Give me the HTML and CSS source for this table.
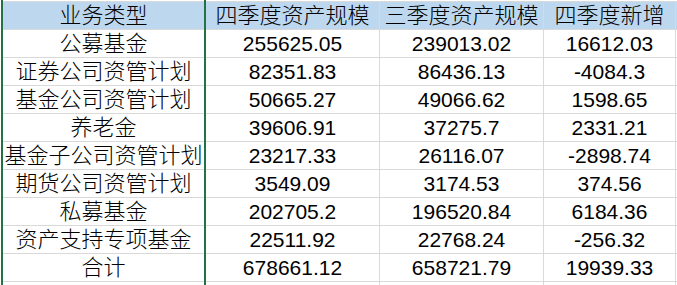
FILE: index.html
```html
<!DOCTYPE html>
<html>

<head>
    <title>四季度资产规模</title>
    <link rel="stylesheet" href="styles.css">
</head>

<body>
    <div class="sheet">
        <table class="grid">
            <colgroup>
                <col class="col-a">
                <col class="col-b">
                <col class="col-c">
                <col class="col-d">
                <col class="col-e">
            </colgroup>
            <thead>
                <tr>
                    <th class="label">业务类型</th>
                    <th class="label">四季度资产规模</th>
                    <th class="label">三季度资产规模</th>
                    <th class="label">四季度新增</th>
                    <th></th>
                </tr>
            </thead>
            <tbody>
                <tr><td class="label">公募基金</td><td>255625.05</td><td>239013.02</td><td>16612.03</td><td></td></tr>
                <tr><td class="label">证券公司资管计划</td><td>82351.83</td><td>86436.13</td><td>-4084.3</td><td></td></tr>
                <tr><td class="label">基金公司资管计划</td><td>50665.27</td><td>49066.62</td><td>1598.65</td><td></td></tr>
                <tr><td class="label">养老金</td><td>39606.91</td><td>37275.7</td><td>2331.21</td><td></td></tr>
                <tr><td class="label">基金子公司资管计划</td><td>23217.33</td><td>26116.07</td><td>-2898.74</td><td></td></tr>
                <tr><td class="label">期货公司资管计划</td><td>3549.09</td><td>3174.53</td><td>374.56</td><td></td></tr>
                <tr><td class="label">私募基金</td><td>202705.2</td><td>196520.84</td><td>6184.36</td><td></td></tr>
                <tr><td class="label">资产支持专项基金</td><td>22511.92</td><td>22768.24</td><td>-256.32</td><td></td></tr>
                <tr><td class="label">合计</td><td>678661.12</td><td>658721.79</td><td>19939.33</td><td></td></tr>
                <tr class="stub"><td></td><td></td><td></td><td></td><td></td></tr>
            </tbody>
        </table>
        <div class="selection"></div>
    </div>
</body>

</html>
```

FILE: styles.css
```css
:root {
    --grid-line: #d9d9d9;
    --header-bg: #bdd7ee;
    --select-color: #217346;
    --text-color: #000;
}

* {
    box-sizing: content-box;
    margin: 0;
    padding: 0;
}

html,
body {
    overflow: hidden;
    background: #fff;
}

body {
    width: 677px;
    height: 285px;
    font-family: "Liberation Sans", "Noto Sans CJK SC", sans-serif;
    color: var(--text-color);
}

.sheet {
    position: relative;
    height: 284px;
    padding: 1px 0 0 1px;
    overflow: hidden;
}

.grid {
    border-collapse: separate;
    border-spacing: 0;
    table-layout: fixed;
    width: 700px;
    border-top: 1px solid var(--grid-line);
    border-left: 1px solid var(--grid-line);
}

.col-a { width: 204px; }
.col-b { width: 174px; }
.col-c { width: 164px; }
.col-d { width: 132px; }
.col-e { width: 26px; }

th,
td {
    height: 27px;
    padding: 0;
    border-right: 1px solid var(--grid-line);
    border-bottom: 1px solid var(--grid-line);
    text-align: center;
    vertical-align: middle;
    font-size: 21px;
    font-weight: normal;
    line-height: 27px;
    white-space: nowrap;
    overflow: hidden;
}

td {
    padding-top: 1px;
    height: 26px;
    line-height: 26px;
}

th {
    background: var(--header-bg);
}

.label {
    font-size: 22px;
    font-weight: 300;
}

th.label {
    font-weight: 300;
}

.stub td {
    height: 3px;
    padding: 0;
    border-bottom: none;
    line-height: 3px;
}

/* selected column A outline */
.selection {
    position: absolute;
    top: 0;
    bottom: 0;
    left: 1px;
    width: 201px;
    border-left: 2px solid var(--select-color);
    border-right: 2px solid var(--select-color);
}
```
